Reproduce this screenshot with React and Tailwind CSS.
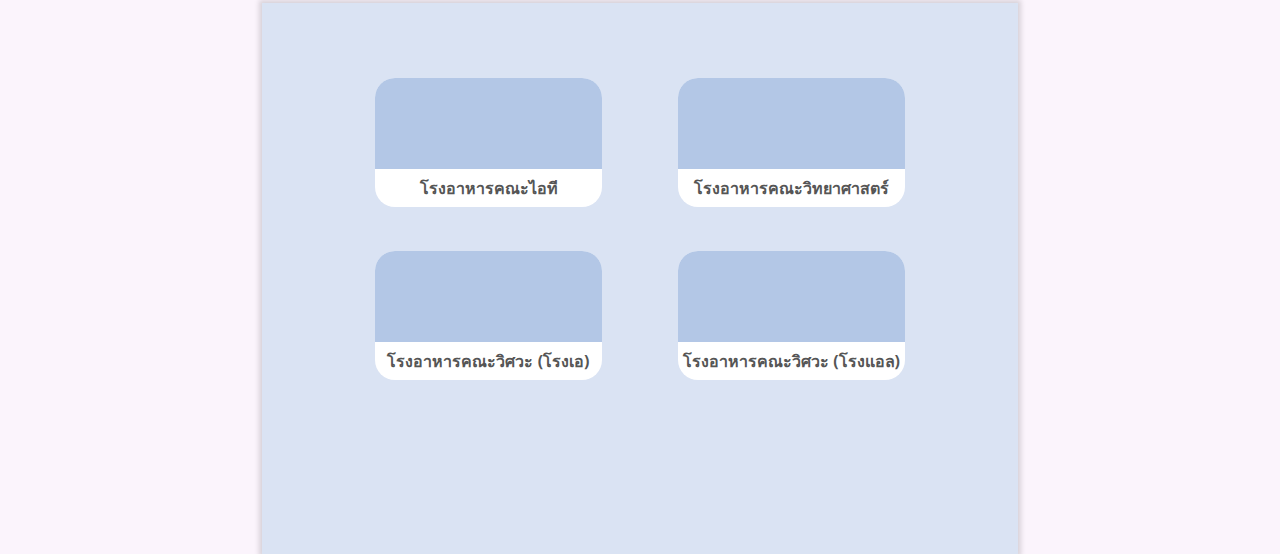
import React from "react";

const canteens = [
  "โรงอาหารคณะไอที",
  "โรงอาหารคณะวิทยาศาสตร์",
  "โรงอาหารคณะวิศวะ (โรงเอ)",
  "โรงอาหารคณะวิศวะ (โรงแอล)",
];

function CanteenCard({ name }) {
  return (
    <div className="w-[227px] min-h-[129px] rounded-[20px] overflow-hidden bg-white flex flex-col cursor-pointer">
      <div className="h-[91px] bg-[#b3c7e6]"></div>
      <div className="flex-1 flex items-center justify-center text-[16px] font-bold text-[#555555] whitespace-nowrap">
        {name}
      </div>
    </div>
  );
}

export default function App() {
  return (
    <div
      className="min-h-[554px] bg-[#fbf4fc] pt-[3px]"
      style={{ fontFamily: '"Noto Sans", "DejaVu Sans", sans-serif' }}
    >
      <div className="mx-auto w-[756px] min-h-[551px] bg-[#dae3f3] shadow-[0_0_5px_3px_rgba(0,0,0,0.14)] pt-[75px]">
        <div className="grid grid-cols-[227px_227px] justify-center gap-x-[76px] gap-y-[44px]">
          {canteens.map((name) => (
            <CanteenCard key={name} name={name} />
          ))}
        </div>
      </div>
    </div>
  );
}
